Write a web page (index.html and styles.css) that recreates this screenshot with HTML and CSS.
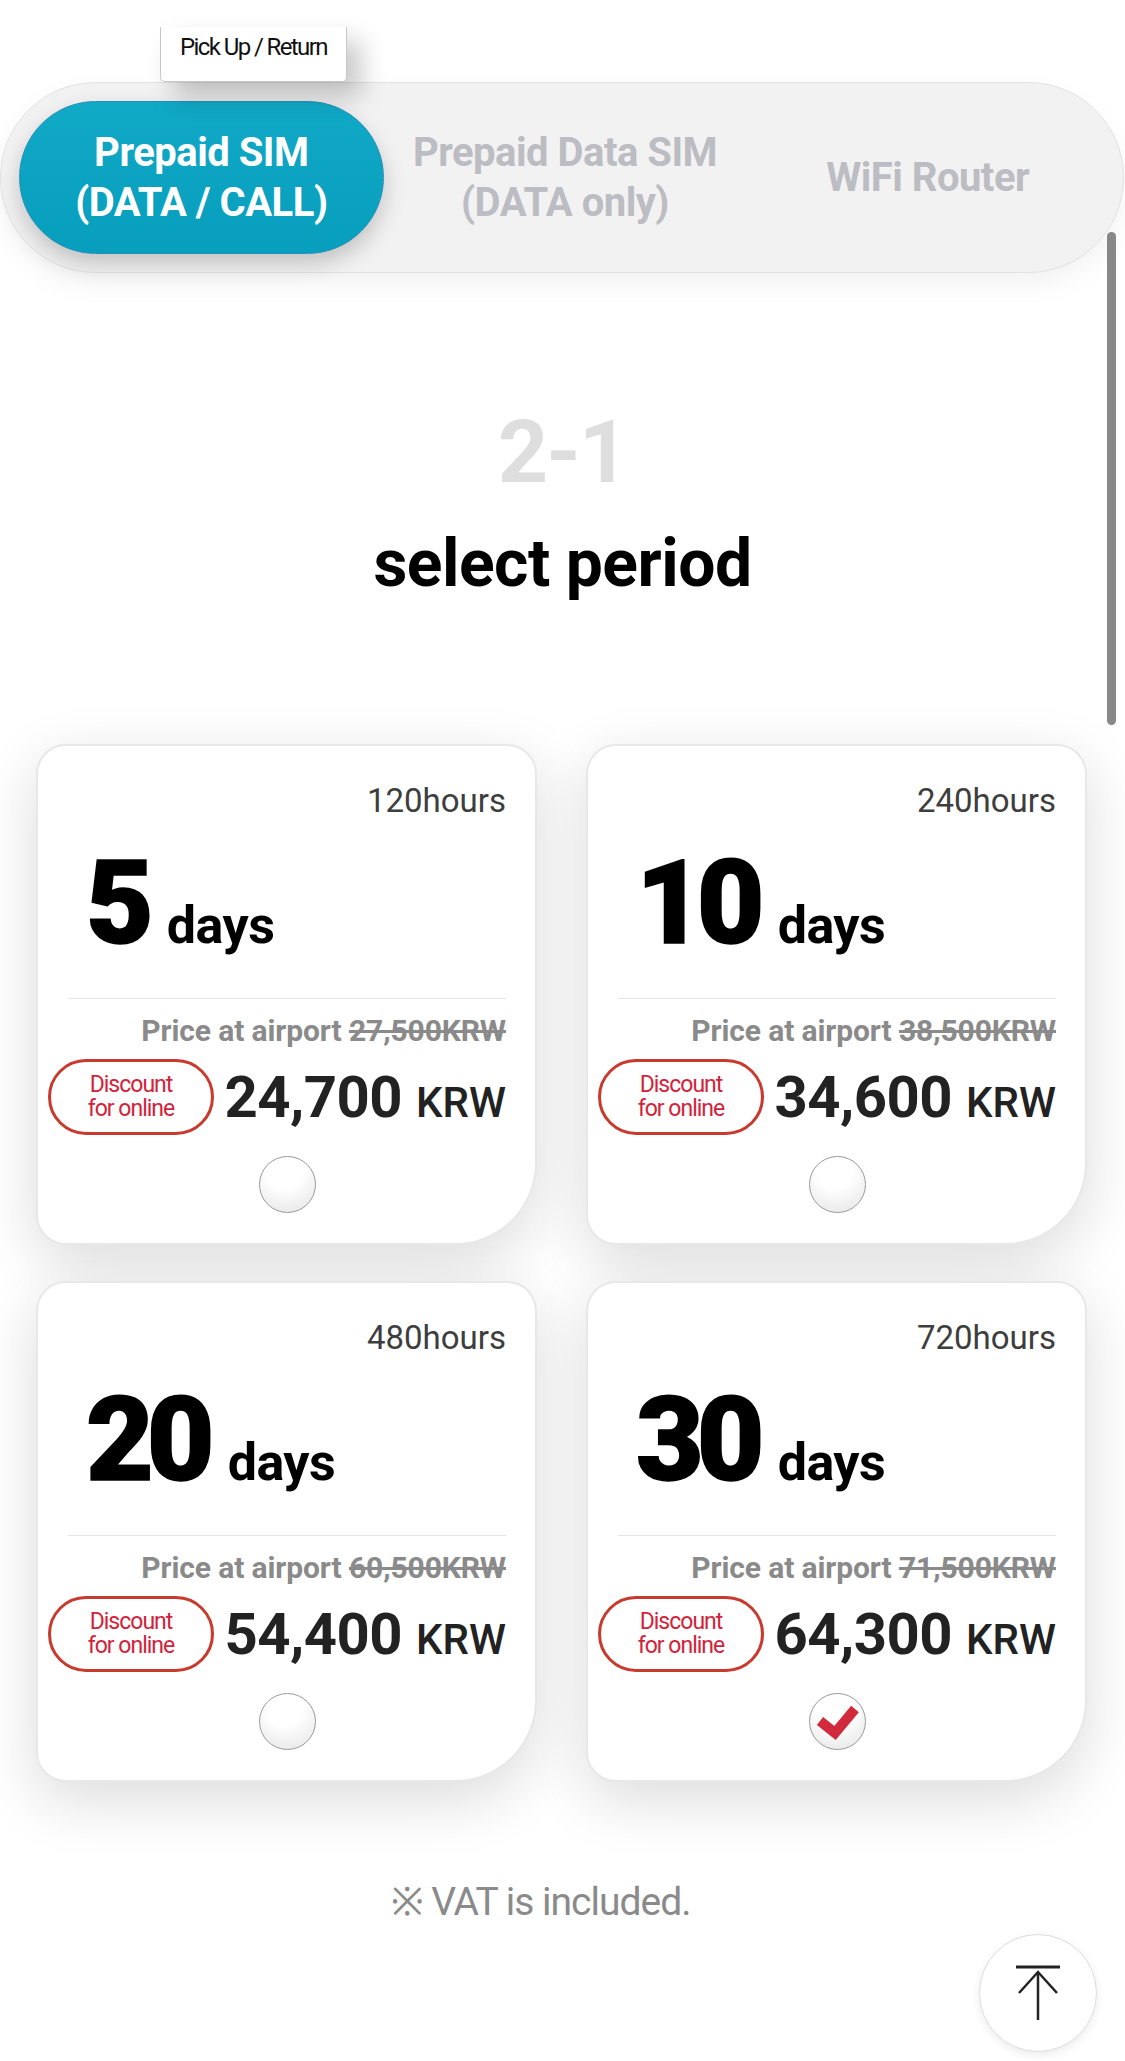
FILE: index.html
```html
<!DOCTYPE html>
<html lang="en">
<head>
    <meta charset="UTF-8">
    <meta name="viewport" content="width=device-width, initial-scale=1.0">
    <title>Select period</title>
    <link rel="stylesheet" href="styles.css">
</head>
<body>
    <div class="page">
        <div class="topbar">
            <div class="pickup">Pick Up / Return</div>
        </div>

        <nav class="tabs">
            <a class="tab active" href="#">Prepaid SIM<br>(DATA / CALL)</a>
            <a class="tab" href="#">Prepaid Data SIM<br>(DATA only)</a>
            <a class="tab" href="#">WiFi Router</a>
        </nav>

        <section class="step">
            <div class="step-no">2-1</div>
            <h2 class="step-title">select period</h2>
        </section>

        <div class="plans">
            <label class="plan">
                <div class="hours">120hours</div>
                <div class="period"><span class="num">5</span><span class="unit">days</span></div>
                <div class="divider"></div>
                <div class="airport">Price at airport <s>27,500KRW</s></div>
                <div class="price-row">
                    <span class="badge">Discount<br>for online</span>
                    <span class="price">24,700<span class="cur">KRW</span></span>
                </div>
                <span class="radio"></span>
            </label>

            <label class="plan">
                <div class="hours">240hours</div>
                <div class="period"><span class="num">10</span><span class="unit">days</span></div>
                <div class="divider"></div>
                <div class="airport">Price at airport <s>38,500KRW</s></div>
                <div class="price-row">
                    <span class="badge">Discount<br>for online</span>
                    <span class="price">34,600<span class="cur">KRW</span></span>
                </div>
                <span class="radio"></span>
            </label>

            <label class="plan">
                <div class="hours">480hours</div>
                <div class="period"><span class="num">20</span><span class="unit">days</span></div>
                <div class="divider"></div>
                <div class="airport">Price at airport <s>60,500KRW</s></div>
                <div class="price-row">
                    <span class="badge">Discount<br>for online</span>
                    <span class="price">54,400<span class="cur">KRW</span></span>
                </div>
                <span class="radio"></span>
            </label>

            <label class="plan">
                <div class="hours">720hours</div>
                <div class="period"><span class="num">30</span><span class="unit">days</span></div>
                <div class="divider"></div>
                <div class="airport">Price at airport <s>71,500KRW</s></div>
                <div class="price-row">
                    <span class="badge">Discount<br>for online</span>
                    <span class="price">64,300<span class="cur">KRW</span></span>
                </div>
                <span class="radio checked">
                    <svg viewBox="0 0 57 57" width="57" height="57">
                        <polyline points="11,28 26,40 46,16" fill="none" stroke="#d12a3c" stroke-width="10"/>
                    </svg>
                </span>
            </label>
        </div>

        <p class="vat">※ VAT is included.</p>
    </div>

    <button class="to-top" type="button">
        <svg viewBox="0 0 118 118" width="118" height="118">
            <line x1="37" y1="33" x2="81" y2="33" stroke="#222" stroke-width="3"/>
            <line x1="59" y1="38" x2="59" y2="86" stroke="#222" stroke-width="2.5"/>
            <polyline points="40,59 59,38 78,59" fill="none" stroke="#222" stroke-width="2.5"/>
        </svg>
    </button>

    <div class="scroll-thumb"></div>
</body>
</html>
```

FILE: styles.css
```css
/* General styles */
body {
    margin: 0;
    font-family: Roboto, "Liberation Sans", Arial, sans-serif;
    background-color: #fff;
    color: #000;
}

.page {
    width: 1125px;
    padding-bottom: 150px;
}

/* Top menu */
.topbar {
    box-sizing: border-box;
    height: 82px;
    padding-top: 27px;
}

.pickup {
    position: relative;
    z-index: 2;
    box-sizing: border-box;
    width: 187px;
    height: 55px;
    margin-left: 160px;
    padding-top: 8px;
    background: #fff;
    border: 1px solid #c8c8c8;
    border-top: none;
    border-radius: 0 0 5px 5px;
    box-shadow: 14px 14px 26px rgba(0, 0, 0, 0.22);
    font-size: 24px;
    line-height: 1;
    letter-spacing: -1.6px;
    text-align: center;
    color: #111;
}

.tabs {
    display: flex;
    box-sizing: border-box;
    width: 1124px;
    height: 191px;
    padding: 18px 14px 18px 18px;
    background: #f2f2f2;
    border: 1px solid #e2e2e2;
    border-radius: 96px;
    box-shadow: 0 12px 26px rgba(0, 0, 0, 0.05);
}

.tab {
    flex: 1;
    display: flex;
    align-items: center;
    justify-content: center;
    text-align: center;
    text-decoration: none;
    font-size: 40px;
    font-weight: 700;
    line-height: 50px;
    letter-spacing: -0.5px;
    color: #bcbcc3;
    border-radius: 80px;
}

.tab.active {
    color: #fff;
    background: linear-gradient(180deg, #10a9c6, #089ebd);
    border: 1px solid #2a8db8;
    box-shadow: 0 10px 22px rgba(0, 0, 0, 0.2);
}

/* Step heading */
.step {
    padding-top: 135px;
    text-align: center;
}

.step-no {
    font-size: 88px;
    font-weight: 700;
    line-height: 1;
    letter-spacing: -2px;
    color: #dedede;
}

.step-title {
    margin: 35px 0 0;
    font-size: 66px;
    font-weight: 700;
    line-height: 1;
    letter-spacing: -0.5px;
}

/* Plan cards */
.plans {
    display: grid;
    grid-template-columns: 501px 501px;
    column-gap: 49px;
    row-gap: 36px;
    margin-top: 147px;
    padding-left: 36px;
}

.plan {
    display: block;
    box-sizing: border-box;
    padding: 38px 29px 30px 30px;
    background: #fff;
    border: 2px solid #e8e8e8;
    border-radius: 30px 30px 82px 30px;
    box-shadow: 0 18px 60px rgba(0, 0, 0, 0.14);
    cursor: pointer;
}

.hours {
    font-size: 33px;
    line-height: 1;
    text-align: right;
    color: #3e3e3e;
}

.period {
    display: flex;
    align-items: baseline;
    margin-top: 28px;
    padding-left: 18px;
    line-height: 1;
}

.num {
    font-size: 117px;
    font-weight: 900;
    letter-spacing: -7px;
    -webkit-text-stroke: 1.5px #000;
}

.unit {
    margin-left: 20px;
    font-size: 52px;
    font-weight: 700;
    letter-spacing: -0.5px;
}

.divider {
    height: 1px;
    margin-top: 36px;
    background: #e6e6e6;
}

.airport {
    margin-top: 17px;
    font-size: 30px;
    font-weight: 700;
    line-height: 1;
    text-align: right;
    color: #8a8a8a;
    letter-spacing: -0.1px;
}

.price-row {
    display: flex;
    align-items: center;
    justify-content: space-between;
    margin: 13px 0 0 -20px;
}

.badge {
    display: flex;
    align-items: center;
    justify-content: center;
    box-sizing: border-box;
    width: 166px;
    height: 76px;
    border: 3px solid #c93a2e;
    border-radius: 40px;
    font-size: 23px;
    line-height: 24px;
    letter-spacing: -1px;
    text-align: center;
    color: #d2233b;
}

.price {
    font-size: 58px;
    font-weight: 700;
    line-height: 1;
    letter-spacing: -0.5px;
    color: #222;
}

.cur {
    margin-left: 14px;
    font-size: 42px;
    font-weight: 500;
    letter-spacing: 0;
}

.radio {
    display: block;
    box-sizing: border-box;
    width: 57px;
    height: 57px;
    margin: 21px auto 0;
    border: 1px solid #9a9a9a;
    border-radius: 50%;
    background: radial-gradient(circle at 45% 25%, #fff 35%, #e3e3e3 100%);
}

.radio svg {
    display: block;
    margin: -1px;
}

.vat {
    margin: 101px 0 0;
    padding-right: 44px;
    font-size: 39px;
    line-height: 1;
    letter-spacing: -1px;
    text-align: center;
    color: #8a8a8a;
}

/* Floating bits */
.to-top {
    position: fixed;
    right: 28px;
    bottom: 9px;
    width: 118px;
    height: 118px;
    padding: 0;
    background: #fff;
    border: 1px solid #dcdcdc;
    border-radius: 50%;
    box-shadow: 0 3px 10px rgba(0, 0, 0, 0.08);
    cursor: pointer;
}

.to-top svg {
    display: block;
    margin: -1px;
}

.scroll-thumb {
    position: fixed;
    left: 1107px;
    top: 232px;
    width: 9px;
    height: 493px;
    border-radius: 5px;
    background: #888;
}
```
